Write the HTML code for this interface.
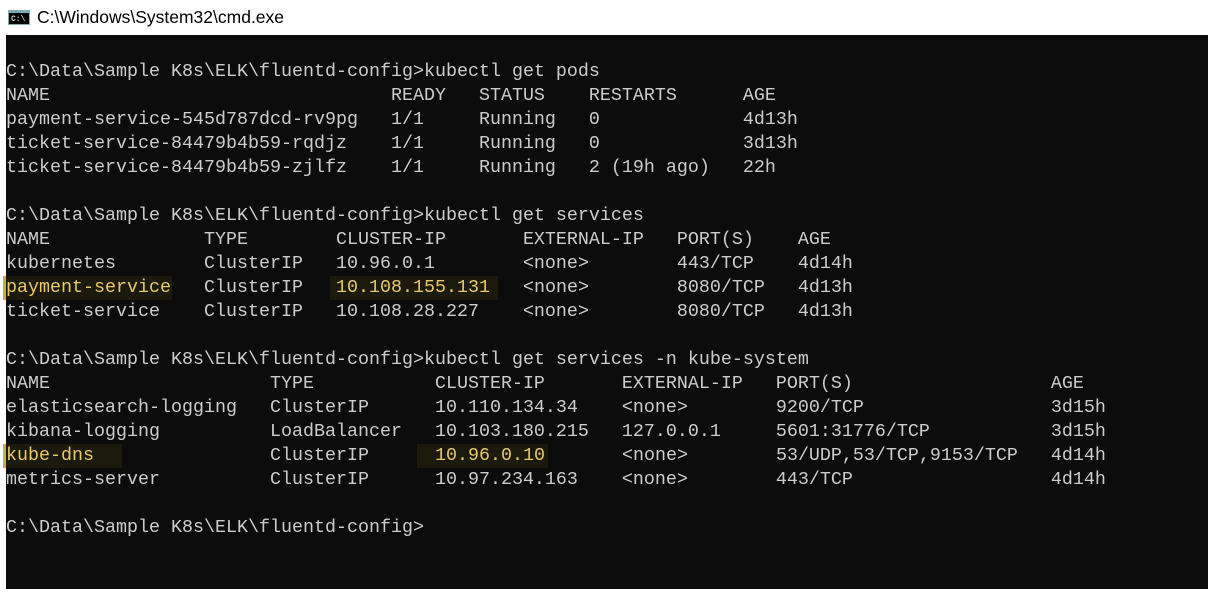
<!DOCTYPE html>
<html><head><meta charset="utf-8"><style>
body{margin:0;width:1208px;height:589px;background:#fff;overflow:hidden;position:relative;font-family:"Liberation Sans",sans-serif}
.title{position:absolute;left:37px;top:7px;font-size:17.5px;color:#000}
.ico{position:absolute;left:8px;top:10px;width:22px;height:15px;background:#000;border:1px solid #8aa;box-sizing:border-box}
.ico i{position:absolute;left:0;top:0;width:20px;height:2px;background:#7ab}
.ico b{position:absolute;left:2px;top:4px;font:bold 8px "Liberation Mono",monospace;color:#ccc}
.term{position:absolute;left:6px;top:35px;width:1202px;height:554px;background:#0c0c0c}
pre{position:absolute;left:6px;top:60px;margin:0;font-family:"Liberation Mono",monospace;font-size:18.33px;line-height:24px;color:#cccccc;white-space:pre}
.hl{position:absolute;background:#1c1a0c}
.bar{position:absolute;left:3px;width:3px;background:#c9ac45}
.y{color:#e8c96a}
</style></head><body>
<div class="ico"><i></i><b>C:\</b></div>
<div class="title">C:\Windows\System32\cmd.exe</div>
<div class="term"></div>
<div class="hl" style="left:6px;top:276px;width:166px;height:24px"></div>
<div class="hl" style="left:330px;top:276px;width:168px;height:24px"></div>
<div class="bar" style="top:276px;height:24px"></div>
<div class="hl" style="left:6px;top:444px;width:116px;height:24px"></div>
<div class="hl" style="left:417px;top:444px;width:131px;height:24px"></div>
<div class="bar" style="top:444px;height:24px"></div>
<pre>C:\Data\Sample K8s\ELK\fluentd-config>kubectl get pods
NAME                               READY   STATUS    RESTARTS      AGE
payment-service-545d787dcd-rv9pg   1/1     Running   0             4d13h
ticket-service-84479b4b59-rqdjz    1/1     Running   0             3d13h
ticket-service-84479b4b59-zjlfz    1/1     Running   2 (19h ago)   22h

C:\Data\Sample K8s\ELK\fluentd-config>kubectl get services
NAME              TYPE        CLUSTER-IP       EXTERNAL-IP   PORT(S)    AGE
kubernetes        ClusterIP   10.96.0.1        &lt;none&gt;        443/TCP    4d14h
<span class="y">payment-service</span>   ClusterIP   <span class="y">10.108.155.131</span>   &lt;none&gt;        8080/TCP   4d13h
ticket-service    ClusterIP   10.108.28.227    &lt;none&gt;        8080/TCP   4d13h

C:\Data\Sample K8s\ELK\fluentd-config>kubectl get services -n kube-system
NAME                    TYPE           CLUSTER-IP       EXTERNAL-IP   PORT(S)                  AGE
elasticsearch-logging   ClusterIP      10.110.134.34    &lt;none&gt;        9200/TCP                 3d15h
kibana-logging          LoadBalancer   10.103.180.215   127.0.0.1     5601:31776/TCP           3d15h
<span class="y">kube-dns</span>                ClusterIP      <span class="y">10.96.0.10</span>       &lt;none&gt;        53/UDP,53/TCP,9153/TCP   4d14h
metrics-server          ClusterIP      10.97.234.163    &lt;none&gt;        443/TCP                  4d14h

C:\Data\Sample K8s\ELK\fluentd-config></pre>
</body></html>
